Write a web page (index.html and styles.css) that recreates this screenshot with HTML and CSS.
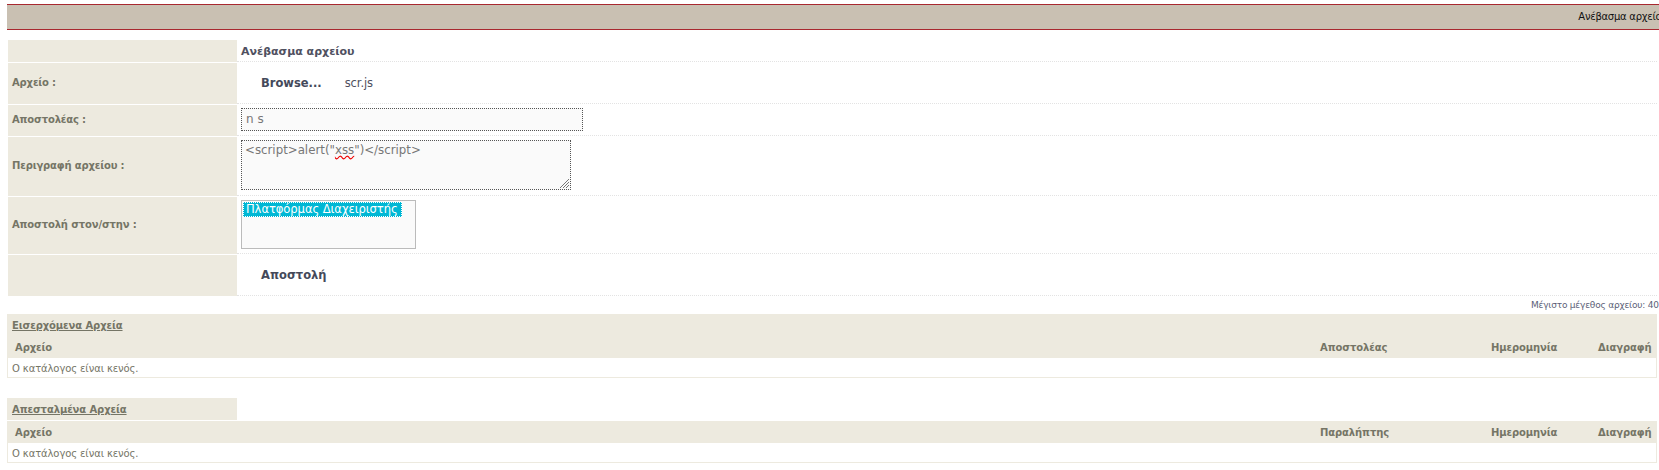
FILE: index.html
```html
<!DOCTYPE html>
<html lang="el">
  <head>
    <meta charset="UTF-8" />
    <title>Ανέβασμα αρχείου</title>
    <link rel="stylesheet" href="styles.css">
  </head>
  <body>
    <div class="titlebar"><span>Ανέβασμα αρχείου</span></div>

    <form class="upload">
      <div class="label"></div>
      <div class="field heading">Ανέβασμα αρχείου</div>

      <div class="label">Αρχείο :</div>
      <div class="field file-field">
        <button type="button" class="plain-btn">Browse...</button>
        <span class="file-name">scr.js</span>
      </div>

      <div class="label">Αποστολέας :</div>
      <div class="field"><div class="input">n s</div></div>

      <div class="label">Περιγραφή αρχείου :</div>
      <div class="field">
        <div class="input area">
          &lt;script&gt;alert("<span class="misspelled">xss</span>")&lt;/script&gt;
          <svg class="grip" width="11" height="11" viewBox="0 0 11 11">
            <path d="M10 1 1 10M10 4 4 10M10 7 7 10" stroke="#777" fill="none" />
          </svg>
        </div>
      </div>

      <div class="label">Αποστολή στον/στην :</div>
      <div class="field">
        <div class="listbox"><div class="option">Πλατφόρμας Διαχειριστής</div></div>
      </div>

      <div class="label"></div>
      <div class="field send-field">
        <button type="button" class="plain-btn">Αποστολή</button>
      </div>
    </form>

    <div class="max-size"><span>Μέγιστο μέγεθος αρχείου: 40 MB</span></div>

    <section class="files">
      <div class="files-title full"><a href="#">Εισερχόμενα Αρχεία</a></div>
      <div class="files-head">
        <span>Αρχείο</span><span>Αποστολέας</span><span>Ημερομηνία</span><span>Διαγραφή</span>
      </div>
      <div class="files-empty">Ο κατάλογος είναι κενός.</div>
    </section>

    <section class="files">
      <div class="files-title"><a href="#">Απεσταλμένα Αρχεία</a></div>
      <div class="files-head sent">
        <span>Αρχείο</span><span>Παραλήπτης</span><span>Ημερομηνία</span><span>Διαγραφή</span>
      </div>
      <div class="files-empty">Ο κατάλογος είναι κενός.</div>
    </section>
  </body>
</html>
```

FILE: styles.css
```css
html,
body {
  margin: 0;
  padding: 0;
  overflow: hidden;
  height: 100%;
  background: #fff;
  font-family: "DejaVu Sans", Verdana, sans-serif;
  font-size: 10px;
  letter-spacing: -0.1px;
  color: #757566;
}

.titlebar {
  display: flex;
  justify-content: flex-end;
  height: 24px;
  margin: 4px -8px 0 7px;
  border-top: 1px solid #a8282f;
  border-bottom: 1px solid #a8282f;
  background: #c9c0b2;
  color: #111;
  font-size: 10px;
  letter-spacing: -0.25px;
  line-height: 24px;
  white-space: nowrap;
}

.upload {
  display: grid;
  grid-template-columns: 229px 1fr;
  grid-template-rows: 22px 41px 31px 59px 57px 41px;
  row-gap: 1px;
  margin: 10px 2px 0 8px;
}

.label {
  display: flex;
  align-items: center;
  padding: 0 0 2px 4px;
  background: #edeadf;
  font-weight: bold;
  letter-spacing: -0.15px;
}

.field {
  padding: 3px 4px 0;
  border-bottom: 1px dotted #e3e3e3;
  color: #4f5060;
}

.heading {
  padding: 0 0 0 4px;
  font-size: 11px;
  font-weight: bold;
  letter-spacing: 0;
  line-height: 24px;
}

.file-field,
.send-field {
  display: flex;
  align-items: center;
  padding: 0 4px;
}

.plain-btn {
  padding: 0 0 0 20px;
  border: none;
  background: none;
  font-family: inherit;
  font-size: 11.5px;
  font-weight: bold;
  color: #44495a;
}

.file-name {
  margin-left: 23px;
  font-size: 11.5px;
}

.input {
  box-sizing: border-box;
  width: 342px;
  height: 23px;
  padding: 3px 4px;
  border: 1px dotted #555;
  background: #fafafa;
  font-size: 12px;
  letter-spacing: 0;
  color: #777;
}

.area {
  position: relative;
  width: 330px;
  height: 50px;
  padding: 2px 3px;
  font-size: 11.8px;
}

.grip {
  position: absolute;
  right: 0;
  bottom: 0;
}

.misspelled {
  text-decoration: underline wavy #e00;
}

.listbox {
  box-sizing: border-box;
  width: 175px;
  height: 49px;
  padding: 1px;
  border: 1px solid #bbb;
  background: #fafafa;
  font-size: 11.6px;
}

.option {
  width: 159px;
  height: 15px;
  padding-left: 3px;
  box-sizing: border-box;
  outline: 1px dotted #fff;
  outline-offset: -1px;
  background: #00b7d4;
  color: #fff;
  line-height: 15px;
  white-space: nowrap;
}

.max-size {
  display: flex;
  justify-content: flex-end;
  height: 18px;
  margin-right: -16px;
  font-size: 9px;
  letter-spacing: -0.2px;
  line-height: 18px;
  color: #5c5f78;
  white-space: nowrap;
}

.files {
  margin: 0 2px 20px 7px;
}

.files-title {
  width: 225px;
  height: 22px;
  padding-left: 5px;
  background: #edeadf;
  font-weight: bold;
  line-height: 24px;
}

.files-title.full {
  width: auto;
}

.files-title a {
  color: #757566;
}

.files-head {
  display: grid;
  grid-template-columns: 1305px 171px 107px 1fr;
  height: 22px;
  padding-left: 8px;
  background: #edeadf;
  font-weight: bold;
  line-height: 24px;
}

.files-head.sent {
  margin-top: 1px;
}

.files-empty {
  height: 19px;
  padding-left: 4px;
  border: 1px solid #edeadf;
  border-top: none;
  line-height: 21px;
}
```
